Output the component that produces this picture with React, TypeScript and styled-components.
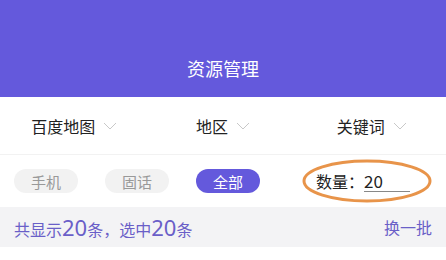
import React from 'react'
import styled, { createGlobalStyle } from 'styled-components'

const primary = '#6459dc'

const GlobalStyle = createGlobalStyle`
  body {
    margin: 0;
    background: #fff;
    font-family: "Noto Sans CJK SC", "Noto Sans", sans-serif;
  }
`

const FILTERS = ['百度地图', '地区', '关键词']
const TAGS = [
  { label: '手机', active: false },
  { label: '固话', active: false },
  { label: '全部', active: true },
]

const App: React.FC = () => {
  return (
    <Page>
      <GlobalStyle />
      <Header>
        <Title>资源管理</Title>
      </Header>

      <FilterBar>
        {FILTERS.map(f => (
          <FilterItem key={f}>
            <span>{f}</span>
            <Chevron viewBox='0 0 14 8' width='14' height='8'>
              <path d='M1 1 L7 7 L13 1' fill='none' stroke='#c8c8c8' strokeWidth='1' />
            </Chevron>
          </FilterItem>
        ))}
      </FilterBar>

      <TagRow>
        <Tags>
          {TAGS.map(t => (
            <Tag key={t.label} active={t.active}>
              {t.label}
            </Tag>
          ))}
        </Tags>
        <Quantity>
          <span>数量：</span>
          <QuantityInput>20</QuantityInput>
          <Ring viewBox='0 0 130 44' width='130' height='44'>
            <ellipse cx='65' cy='22' rx='63' ry='20' fill='none' stroke='#e8944a' strokeWidth='3' />
          </Ring>
        </Quantity>
      </TagRow>

      <SummaryBar>
        <Summary>
          共显示<Num>20</Num>条，选中<Num>20</Num>条
        </Summary>
        <Refresh>换一批</Refresh>
      </SummaryBar>
    </Page>
  )
}

const Page = styled.div`
  width: 446px;
  height: 260px;
  background: #fff;
  overflow: hidden;
`

const Header = styled.header`
  height: 97px;
  background: ${primary};
  display: flex;
  align-items: flex-end;
  justify-content: center;
  padding-bottom: 17px;
  box-sizing: border-box;
`

const Title = styled.h1`
  margin: 0;
  color: #fff;
  font-size: 18px;
  font-weight: 400;
  line-height: 24px;
`

const FilterBar = styled.div`
  height: 57px;
  display: flex;
  border-bottom: 1px solid #f2f2f2;
`

const FilterItem = styled.div`
  flex: 1;
  display: flex;
  align-items: center;
  justify-content: center;
  gap: 8px;
  font-size: 16px;
  color: #222;
`

const Chevron = styled.svg`
  display: block;
  margin-top: 1px;
`

const TagRow = styled.div`
  height: 52px;
  display: flex;
  align-items: center;
  justify-content: space-between;
  padding: 0 14px;
`

const Tags = styled.div`
  display: flex;
  gap: 27px;
`

const Tag = styled.div<{ active?: boolean }>`
  width: 64px;
  height: 24px;
  border-radius: 12px;
  display: flex;
  align-items: center;
  justify-content: center;
  font-size: 15px;
  background: ${p => (p.active ? primary : '#f2f2f2')};
  color: ${p => (p.active ? '#fff' : '#999')};
`

const Quantity = styled.div`
  position: relative;
  display: flex;
  align-items: center;
  font-size: 16px;
  color: #222;
  margin-right: 22px;
`

const QuantityInput = styled.span`
  display: inline-block;
  width: 46px;
  border-bottom: 1px solid #888;
  line-height: 20px;
  font-size: 17px;
`

const Ring = styled.svg`
  position: absolute;
  left: -14px;
  top: 50%;
  transform: translateY(-50%);
  pointer-events: none;
`

const SummaryBar = styled.div`
  height: 40px;
  background: #f3f3f5;
  display: flex;
  align-items: center;
  justify-content: space-between;
  padding: 0 14px;
  color: #6a5fc8;
  font-size: 16px;
`

const Summary = styled.div`
  display: flex;
  align-items: baseline;
`

const Num = styled.span`
  font-size: 22px;
  font-family: "Noto Sans", sans-serif;
`

const Refresh = styled.div``

export default App
